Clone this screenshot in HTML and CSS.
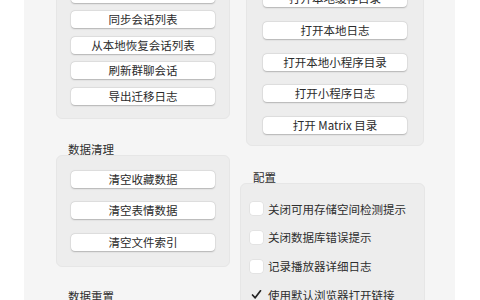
FILE: index.html
```html
<!DOCTYPE html>
<html lang="zh">
<head>
<meta charset="utf-8">
<link rel="stylesheet" href="styles.css">
</head>
<body>
<div class="panel">
  <div class="cols">
    <div class="col col-left">
      <div class="group g1">
        <div class="btn">打开本地缓存目录</div>
        <div class="btn">同步会话列表</div>
        <div class="btn">从本地恢复会话列表</div>
        <div class="btn">刷新群聊会话</div>
        <div class="btn">导出迁移日志</div>
      </div>
      <div class="label l1">数据清理</div>
      <div class="group g2">
        <div class="btn">清空收藏数据</div>
        <div class="btn">清空表情数据</div>
        <div class="btn">清空文件索引</div>
      </div>
      <div class="label l2">数据重置</div>
    </div>
    <div class="col col-right">
      <div class="group g3">
        <div class="btn">打开本地缓存目录</div>
        <div class="btn">打开本地日志</div>
        <div class="btn">打开本地小程序目录</div>
        <div class="btn">打开小程序日志</div>
        <div class="btn">打开 Matrix 目录</div>
      </div>
      <div class="label l3">配置</div>
      <div class="group config">
        <div class="row"><span class="cb"></span><span>关闭可用存储空间检测提示</span></div>
        <div class="row"><span class="cb"></span><span>关闭数据库错误提示</span></div>
        <div class="row"><span class="cb"></span><span>记录播放器详细日志</span></div>
        <div class="row"><span class="cb checked"><svg width="11" height="11" viewBox="0 0 11 11"><path d="M1.5 6 L4.2 8.8 L9.5 1.8" fill="none" stroke="#222" stroke-width="1.7" stroke-linecap="round" stroke-linejoin="round"/></svg></span><span>使用默认浏览器打开链接</span></div>
      </div>
    </div>
  </div>
</div>
</body>
</html>
```

FILE: styles.css
```css
html, body {
  margin: 0;
  padding: 0;
  background: #ffffff;
  width: 480px;
  height: 300px;
  overflow: hidden;
}
body {
  font-family: "Noto Sans CJK SC", "Noto Sans", sans-serif;
  font-size: 11.5px;
  color: #2e2e2e;
}
.panel {
  margin-left: 24px;
  width: 431px;
  height: 300px;
  background: #f5f5f5;
  overflow: hidden;
}
.cols {
  display: flex;
  padding-left: 32px;
  gap: 14px;
  align-items: flex-start;
}
.col {
  display: flex;
  flex-direction: column;
}
.col-left {
  width: 174px;
  margin-top: -30.5px;
}
.col-right {
  width: 180px;
  margin-top: -24.6px;
}
.group {
  background: #ededed;
  border: 1px solid #e6e6e6;
  border-radius: 6px;
  box-sizing: border-box;
  display: flex;
  flex-direction: column;
  align-items: center;
}
.g1 {
  padding: 15px 0 13px;
  gap: 8.5px;
}
.g2 {
  padding: 15px 0 15px;
  gap: 14.5px;
}
.g3 {
  padding: 14px 0 11px;
  gap: 14.6px;
  margin-left: 2px;
}
.btn {
  width: 144px;
  height: 17px;
  line-height: 17px;
  background: #ffffff;
  border-radius: 4px;
  box-shadow: 0 0.5px 1.5px rgba(0,0,0,0.22), 0 0 0 0.5px rgba(0,0,0,0.06);
  text-align: center;
  white-space: nowrap;
  color: #2b2b2b;
}
.label {
  line-height: 12px;
  height: 12px;
  padding-left: 12px;
  color: #2e2e2e;
}
.l1 { margin-top: 24px; }
.l2 { margin-top: 23px; }
.l3 { margin-top: 25px; padding-left: 9px; }
.config {
  align-items: stretch;
  padding: 17px 0 10px 9px;
  gap: 12.7px;
  margin-left: -4px;
  width: 185px;
}
.row {
  display: flex;
  align-items: center;
  height: 16px;
  gap: 5px;
  white-space: nowrap;
}
.cb {
  width: 13px;
  height: 13px;
  border-radius: 3px;
  background: #ffffff;
  box-shadow: 0 0 0 0.5px rgba(0,0,0,0.08);
  flex: none;
  display: flex;
  align-items: center;
  justify-content: center;
}
.cb.checked {
  background: transparent;
  box-shadow: none;
}
```
